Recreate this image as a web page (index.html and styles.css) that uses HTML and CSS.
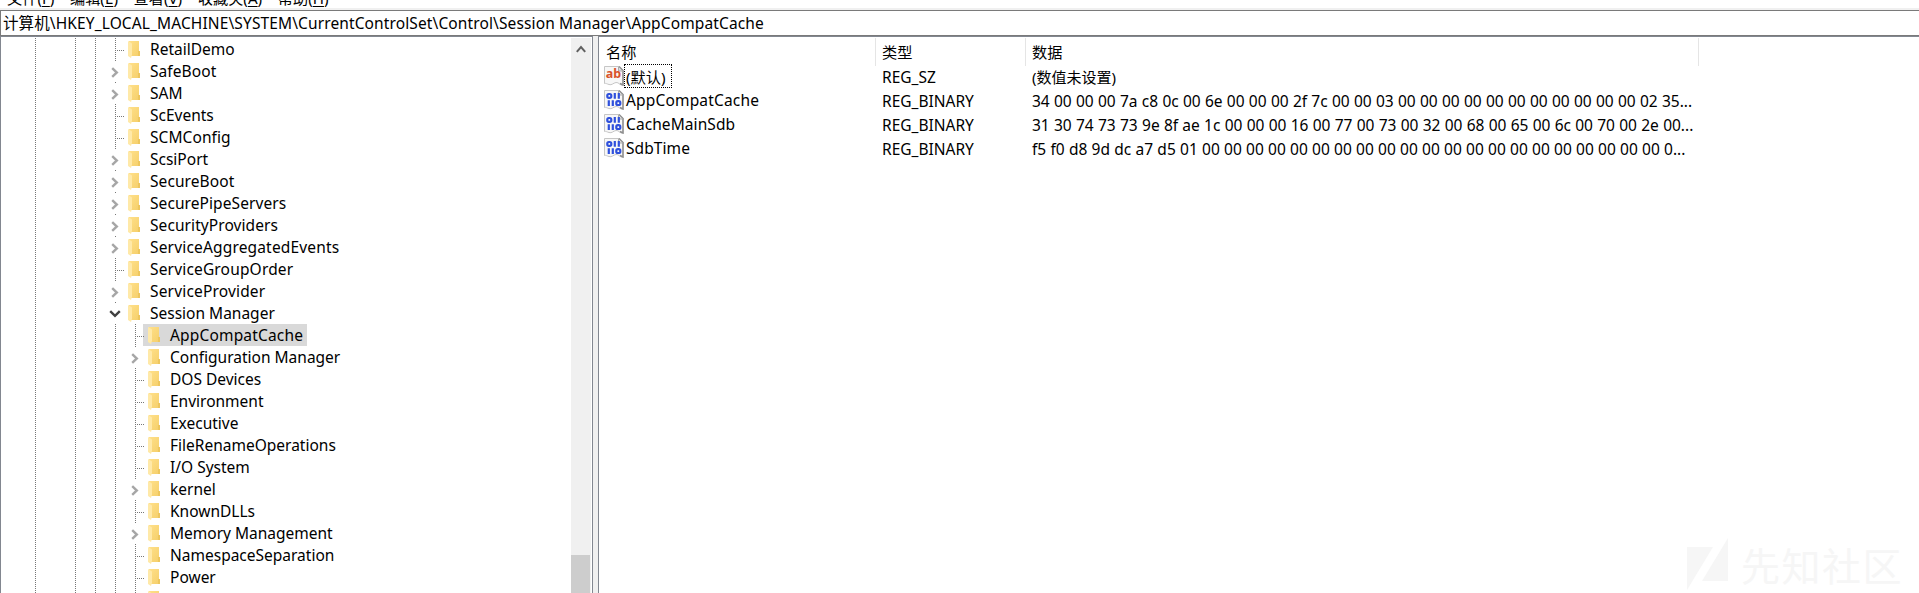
FILE: index.html
```html
<!DOCTYPE html>
<html lang="zh-CN">
<head>
<meta charset="utf-8">
<title>注册表编辑器</title>
<link rel="stylesheet" href="styles.css">
</head>
<body>
<svg class="defs" aria-hidden="true">
  <defs>
    <linearGradient id="fold" x1="0" x2="1" y1="0" y2="1"><stop offset="0" stop-color="#ffe08a"/><stop offset="1" stop-color="#f5cf6a"/></linearGradient>
    <symbol id="folder" viewBox="0 0 12 17"><path d="M1 0H11V10L12 11V15H1Z" fill="url(#fold)"/><path d="M0 0L4 2.5V13.5L3 17L0 15Z" fill="#ffe9a8"/><path d="M10 10H12V15H10Z" fill="#edc65f"/></symbol>
    <symbol id="right" viewBox="0 0 8 11"><path d="M1.2 1.2L5.8 5.5L1.2 9.8" fill="none" stroke="#a6a6a6" stroke-width="2.4"/></symbol>
    <symbol id="down" viewBox="0 0 12 8"><path d="M1.2 1.2L6 5.8L10.8 1.2" fill="none" stroke="#404040" stroke-width="2.4"/></symbol>
    <symbol id="page" viewBox="0 0 20 20"><path d="M.5 .5H15L19 4.5V19C16 20 15 16 12 16.5C9 17 8 19.5 5 18.5C3 18 2 17 .5 17.5Z" fill="#f7f7f7" stroke="#c6c6c6"/><path d="M15 .5L19 4.5V19L16 17.5" fill="none" stroke="#8e8e8e" stroke-width="1.5"/><path d="M14.5 1V5H18.5" fill="#ddd" stroke="#aaa"/></symbol>
    <symbol id="binary" viewBox="0 0 20 20"><use href="#page"/><g fill="none" stroke="#2f50dc" stroke-width="2.2"><rect x="3.3" y="4" width="4" height="3.8" rx="1.6"/><path d="M10.8 3V8.8M14.8 3V8.8M4.8 10.2V16M8.8 10.2V16"/><rect x="12.3" y="11.2" width="4" height="3.8" rx="1.6"/></g></symbol>
  </defs>
</svg>
<div class="window">
  <nav class="menu"><span>文件(<u>F</u>)</span><span>编辑(<u>E</u>)</span><span>查看(<u>V</u>)</span><span>收藏夹(<u>A</u>)</span><span>帮助(<u>H</u>)</span></nav>
  <div class="address">计算机\HKEY_LOCAL_MACHINE\SYSTEM\CurrentControlSet\Control\Session Manager\AppCompatCache</div>
  <main class="panes">
    <section class="tree-pane">
      <div class="tree">
        <i class="guide g1"></i><i class="guide g2"></i><i class="guide g3"></i>
        <div class="row leaf"><i class="node"></i><svg class="folder"><use href="#folder"/></svg><span>RetailDemo</span></div>
        <div class="row"><i class="node"><svg class="right"><use href="#right"/></svg></i><svg class="folder"><use href="#folder"/></svg><span class="wide">SafeBoot</span></div>
        <div class="row"><i class="node"><svg class="right"><use href="#right"/></svg></i><svg class="folder"><use href="#folder"/></svg><span class="wide">SAM</span></div>
        <div class="row leaf"><i class="node"></i><svg class="folder"><use href="#folder"/></svg><span>ScEvents</span></div>
        <div class="row leaf"><i class="node"></i><svg class="folder"><use href="#folder"/></svg><span class="wide">SCMConfig</span></div>
        <div class="row"><i class="node"><svg class="right"><use href="#right"/></svg></i><svg class="folder"><use href="#folder"/></svg><span>ScsiPort</span></div>
        <div class="row"><i class="node"><svg class="right"><use href="#right"/></svg></i><svg class="folder"><use href="#folder"/></svg><span class="wide">SecureBoot</span></div>
        <div class="row"><i class="node"><svg class="right"><use href="#right"/></svg></i><svg class="folder"><use href="#folder"/></svg><span class="wide">SecurePipeServers</span></div>
        <div class="row"><i class="node"><svg class="right"><use href="#right"/></svg></i><svg class="folder"><use href="#folder"/></svg><span class="wide">SecurityProviders</span></div>
        <div class="row"><i class="node"><svg class="right"><use href="#right"/></svg></i><svg class="folder"><use href="#folder"/></svg><span class="wider">ServiceAggregatedEvents</span></div>
        <div class="row leaf"><i class="node"></i><svg class="folder"><use href="#folder"/></svg><span class="wider">ServiceGroupOrder</span></div>
        <div class="row"><i class="node"><svg class="right"><use href="#right"/></svg></i><svg class="folder"><use href="#folder"/></svg><span class="wider">ServiceProvider</span></div>
        <div class="row"><i class="node"><svg class="down"><use href="#down"/></svg></i><svg class="folder"><use href="#folder"/></svg><span>Session Manager</span></div>
        <div class="children">
          <div class="row leaf selected"><i class="node"></i><svg class="folder"><use href="#folder"/></svg><span class="wider">AppCompatCache</span></div>
          <div class="row"><i class="node"><svg class="right"><use href="#right"/></svg></i><svg class="folder"><use href="#folder"/></svg><span>Configuration Manager</span></div>
          <div class="row leaf"><i class="node"></i><svg class="folder"><use href="#folder"/></svg><span>DOS Devices</span></div>
          <div class="row leaf"><i class="node"></i><svg class="folder"><use href="#folder"/></svg><span>Environment</span></div>
          <div class="row leaf"><i class="node"></i><svg class="folder"><use href="#folder"/></svg><span>Executive</span></div>
          <div class="row leaf"><i class="node"></i><svg class="folder"><use href="#folder"/></svg><span>FileRenameOperations</span></div>
          <div class="row leaf"><i class="node"></i><svg class="folder"><use href="#folder"/></svg><span>I/O System</span></div>
          <div class="row"><i class="node"><svg class="right"><use href="#right"/></svg></i><svg class="folder"><use href="#folder"/></svg><span>kernel</span></div>
          <div class="row leaf"><i class="node"></i><svg class="folder"><use href="#folder"/></svg><span>KnownDLLs</span></div>
          <div class="row"><i class="node"><svg class="right"><use href="#right"/></svg></i><svg class="folder"><use href="#folder"/></svg><span>Memory Management</span></div>
          <div class="row leaf"><i class="node"></i><svg class="folder"><use href="#folder"/></svg><span>NamespaceSeparation</span></div>
          <div class="row leaf"><i class="node"></i><svg class="folder"><use href="#folder"/></svg><span>Power</span></div>
          <div class="row leaf"><i class="node"></i><svg class="folder"><use href="#folder"/></svg></div>
        </div>
      </div>
      <div class="scrollbar"><svg width="10" height="8" viewBox="0 0 10 8"><path d="M.8 6.8L5 2L9.2 6.8" fill="none" stroke="#606060" stroke-width="2"/></svg><div class="thumb"></div></div>
    </section>
    <section class="values">
      <div class="head"><span>名称</span><span>类型</span><span>数据</span></div>
      <div class="value"><div class="name"><svg class="icon" viewBox="0 0 20 20"><use href="#page"/><text x="1.8" y="12.3" class="ab">ab</text></svg><span class="focus">(默认)</span></div><span>REG_SZ</span><span class="unset">(数值未设置)</span></div>
      <div class="value"><div class="name"><svg class="icon"><use href="#binary"/></svg><span class="wider">AppCompatCache</span></div><span>REG_BINARY</span><span class="data">34 00 00 00 7a c8 0c 00 6e 00 00 00 2f 7c 00 00 03 00 00 00 00 00 00 00 00 00 00 00 02 35...</span></div>
      <div class="value"><div class="name"><svg class="icon"><use href="#binary"/></svg><span class="wide">CacheMainSdb</span></div><span>REG_BINARY</span><span class="data">31 30 74 73 73 9e 8f ae 1c 00 00 00 16 00 77 00 73 00 32 00 68 00 65 00 6c 00 70 00 2e 00...</span></div>
      <div class="value"><div class="name"><svg class="icon"><use href="#binary"/></svg><span class="wide">SdbTime</span></div><span>REG_BINARY</span><span class="data">f5 f0 d8 9d dc a7 d5 01 00 00 00 00 00 00 00 00 00 00 00 00 00 00 00 00 00 00 00 00 00 0...</span></div>
    </section>
  </main>
  <div class="watermark"><svg width="42" height="52" viewBox="0 0 42 52"><path d="M0 9H26L0 52ZM41 0V43H15Z" fill="#f6f6f6"/></svg><span>先知社区</span></div>
</div>
</body>
</html>
```
FILE: styles.css
```css
* { box-sizing: border-box; }
body { margin: 0; background: #fff; color: #000; font: 15.5px/22px "Noto Sans", "Noto Sans CJK SC", sans-serif; overflow: hidden; }
.defs { position: absolute; width: 0; height: 0; }
.window { position: relative; width: 1919px; height: 593px; overflow: hidden; display: flex; flex-direction: column; }
.menu { height: 10px; flex: none; display: flex; align-items: flex-end; gap: 15.6px; padding-left: 7px; border-bottom: 2px solid #f0f0f0; white-space: nowrap; overflow: hidden; font-size: 15.2px; line-height: 20px; }
.menu u { text-underline-offset: 2px; }
.address { height: 26px; flex: none; border: 1px solid #7a7a7a; border-width: 1px 0 1px 1px; padding-left: 2px; line-height: 25px; letter-spacing: .12px; white-space: nowrap; }
.panes { flex: 1; min-height: 0; display: flex; }
.tree-pane { width: 593px; display: flex; border: 1px solid #828790; border-bottom: 0; padding-top: 1px; }
.tree { position: relative; flex: 1; padding-left: 105px; overflow: hidden; }
.guide { position: absolute; top: 0; bottom: 0; width: 1px; background: repeating-linear-gradient(#777 0 1px, transparent 1px 2px); }
.g1 { left: 34px; } .g2 { left: 74px; } .g3 { left: 94px; }
.row { height: 22px; display: flex; align-items: center; white-space: nowrap; }
.node { position: relative; width: 18px; height: 22px; display: flex; align-items: center; padding-left: 5px; margin-right: 4px; flex: none; }
.leaf .node { background: repeating-linear-gradient(#777 0 1px, transparent 1px 2px) 9px 0 / 1px 22px no-repeat, repeating-linear-gradient(90deg, #777 0 1px, transparent 1px 2px) 9px 12px / 9px 1px no-repeat; }
.row:not(.leaf) .node { background: linear-gradient(#777, #777) 9px 0 / 1px 1px no-repeat; }
.right { width: 8px; height: 11px; margin-top: 2px; }
.down { width: 12px; height: 8px; margin-left: -2px; flex: none; margin-top: 1px; }
.folder { width: 12px; height: 17px; margin-right: 10px; flex: none; }
.wide { letter-spacing: .08px; }
.wider { letter-spacing: .17px; }
.children { padding-left: 20px; background: repeating-linear-gradient(#777 0 1px, transparent 1px 2px) 9px 0 / 1px 100% no-repeat; }
.selected { width: 181px; background: linear-gradient(#d9d9d9, #d9d9d9) 17px 0 / 164px 22px no-repeat; }
.scrollbar { width: 21px; background: #f0f0f0; border-right: 1px solid #fff; display: flex; flex-direction: column; justify-content: space-between; }
.scrollbar svg { margin: 7px 0 0 5px; }
.thumb { height: 38px; width: 19px; background: #cdcdcd; }
.values { flex: 1; margin-left: 5px; border-left: 1px solid #828790; border-top: 1px solid #828790; padding-top: 1px; box-shadow: -5px 0 #f0f0f0; }
.head, .value { display: grid; grid-template-columns: 277px 150px 673px; }
.head { height: 26px; line-height: 28px; font-size: 15.2px; }
.head span { padding-left: 7px; border-right: 1px solid #e5e5e5; }
.head span:nth-child(n+2) { padding-left: 6px; }
.value { height: 24px; line-height: 26px; white-space: nowrap; }
.value > span { padding-left: 6px; }
.value .unset { font-size: 15px; }
.name { display: flex; align-items: center; height: 24px; padding-left: 5px; }
.name span { padding-left: 2px; }
.icon { width: 20px; height: 20px; flex: none; }
.name .focus { border: 1px dotted #000; width: 48px; height: 24px; line-height: 24px; padding-left: 1px; font-size: 15.2px; }
.ab { font: bold 12.5px "Noto Sans", sans-serif; fill: #d9532c; }
.data { word-spacing: .24px; }
.watermark { position: absolute; left: 1687px; top: 538px; display: flex; color: #f6f6f6; font: 39px/52px "Noto Sans CJK SC", sans-serif; gap: 12px; letter-spacing: 1.5px; }
```
